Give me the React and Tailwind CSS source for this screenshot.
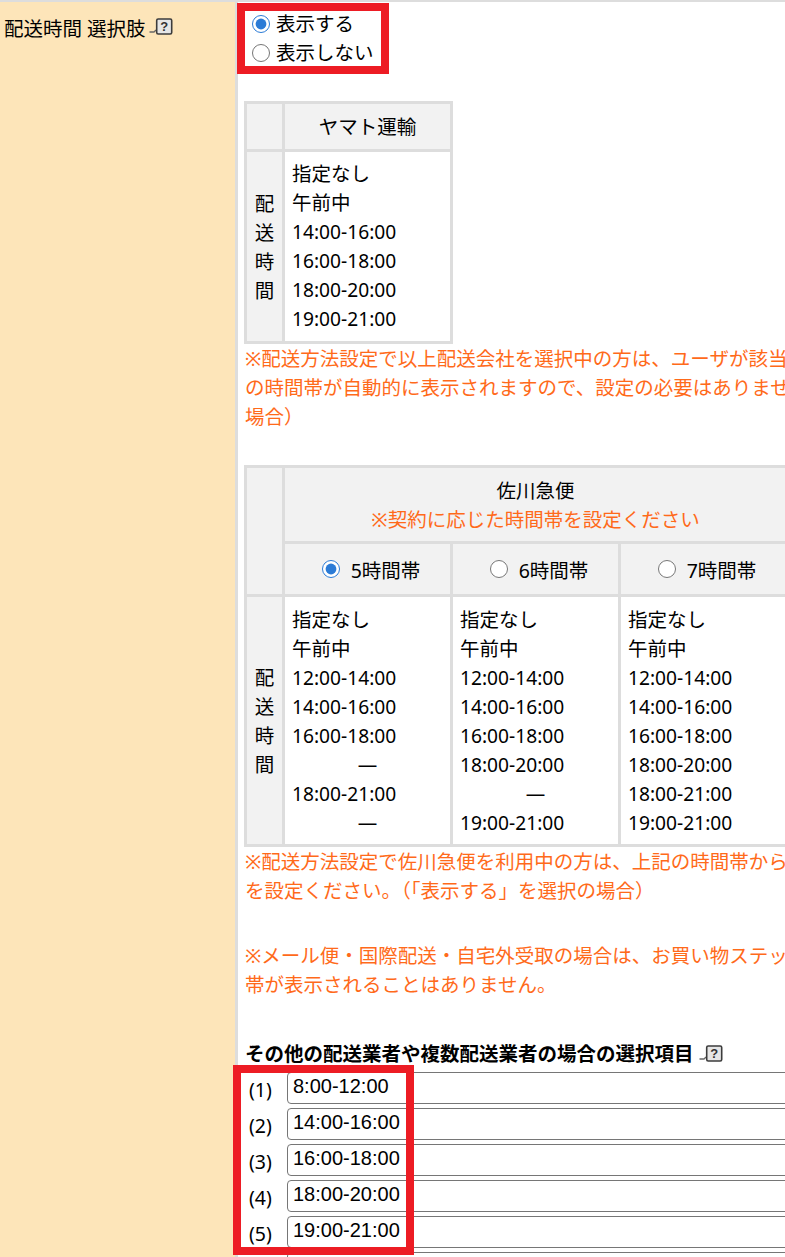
const Help = () => (
  <svg width="24" height="18" viewBox="0 0 24 18" className="block shrink-0">
    <path d="M0.5 14h4.5l2-2" fill="none" stroke="#666" strokeWidth="1.3" />
    <rect x="7.7" y="1" width="15" height="15" rx="1.5" fill="#e6e6e6" stroke="#3c3c3c" strokeWidth="1.6" />
    <text x="15.2" y="13.3" textAnchor="middle" fontSize="13" fontWeight="700" fill="#333" fontFamily="Liberation Sans">?</text>
  </svg>
);

const Radio = ({ on }) => (
  <input type="radio" readOnly checked={!!on} className="m-0 h-[18px] w-[18px] shrink-0 accent-[#2b7bd6]" />
);

const Lines = ({ items }) => (
  <div className="flex flex-col">
    {items.map((t, i) => (
      <div key={i} className={t === "—" ? "h-[29px] text-center" : /^\d/.test(t) ? "h-[29px] text-[19.2px]" : "h-[29px]"}>{t}</div>
    ))}
  </div>
);

const th = "border-[3px] border-[#dddddd] bg-[#f2f2f2] font-normal text-center";
const td1 = "border-[3px] border-[#dddddd] bg-white px-[7px] pt-[7px] pb-[8px] align-top text-left";
const td2 = "border-[3px] border-[#dddddd] bg-white px-[7px] pt-[8px] pb-[7px] align-top text-left";

const VLabel = () => (
  <td className={`${th} w-[38px]`}>
    <div className="flex flex-col items-center">
      {["配", "送", "時", "間"].map((c) => (
        <div key={c} className="h-[29px]">{c}</div>
      ))}
    </div>
  </td>
);

const Head = ({ on, label }) => (
  <th className={`${th} h-[53px] w-[168px] pl-[7px]`}>
    <div className="flex items-center justify-center gap-[11px]">
      <Radio on={on} />
      <span className="mt-[3px]">{label}</span>
    </div>
  </th>
);

const inputs = ["8:00-12:00", "14:00-16:00", "16:00-18:00", "18:00-20:00", "19:00-21:00", ""];

export default function App() {
  return (
    <div className="relative h-[1257px] w-[785px] overflow-hidden bg-white text-[19.5px] leading-[29px] text-black [font-family:'Noto_Sans','Noto_Sans_CJK_JP',sans-serif]">
      <div className="h-[2px] bg-[#dddddd]" />
      <div className="flex h-[1255px]">
        <div className="flex w-[235px] shrink-0 items-start bg-[#fde5b9] pl-[4px] pt-[12px]">
          <span>配送時間 選択肢</span>
          <span className="ml-[3px] mt-[4px] flex"><Help /></span>
        </div>
        <div className="w-[3px] shrink-0 bg-[#dddddd]" />
        <div className="w-[900px] shrink-0 pl-[6px]">
          <div className="pl-[8px] pt-[7px]">
            <label className="flex h-[29px] items-center gap-[6px]"><Radio on /><span>表示する</span></label>
            <label className="flex h-[29px] items-center gap-[6px]"><Radio /><span>表示しない</span></label>
          </div>

          <table className="mt-[34px] border-collapse">
            <tbody>
              <tr>
                <th className={`${th} w-[38px]`} />
                <th className={`${th} h-[48px] w-[168px]`}>ヤマト運輸</th>
              </tr>
              <tr>
                <VLabel />
                <td className={td1}>
                  <Lines items={["指定なし", "午前中", "14:00-16:00", "16:00-18:00", "18:00-20:00", "19:00-21:00"]} />
                </td>
              </tr>
            </tbody>
          </table>

          <div className="w-[760px] whitespace-nowrap pl-[1px] text-[#ff6a1a]">
            <div>※配送方法設定で以上配送会社を選択中の方は、ユーザが該当</div>
            <div>の時間帯が自動的に表示されますので、設定の必要はありませ</div>
            <div>場合）</div>
          </div>

          <table className="mt-[34px] border-collapse">
            <tbody>
              <tr>
                <th rowSpan={2} className={`${th} w-[38px]`} />
                <th colSpan={3} className={`${th} h-[76px]`}>
                  <div>佐川急便</div>
                  <div className="text-[#ff6a1a]">※契約に応じた時間帯を設定ください</div>
                </th>
              </tr>
              <tr>
                <Head on label="5時間帯" />
                <Head label="6時間帯" />
                <Head label="7時間帯" />
              </tr>
              <tr>
                <VLabel />
                <td className={td2}>
                  <Lines items={["指定なし", "午前中", "12:00-14:00", "14:00-16:00", "16:00-18:00", "—", "18:00-21:00", "—"]} />
                </td>
                <td className={td2}>
                  <Lines items={["指定なし", "午前中", "12:00-14:00", "14:00-16:00", "16:00-18:00", "18:00-20:00", "—", "19:00-21:00"]} />
                </td>
                <td className={td2}>
                  <Lines items={["指定なし", "午前中", "12:00-14:00", "14:00-16:00", "16:00-18:00", "18:00-20:00", "18:00-21:00", "19:00-21:00"]} />
                </td>
              </tr>
            </tbody>
          </table>

          <div className="w-[760px] whitespace-nowrap pl-[1px] text-[#ff6a1a]">
            <div>※配送方法設定で佐川急便を利用中の方は、上記の時間帯から</div>
            <div>を設定ください。（「表示する」を選択の場合）</div>
            <div className="mt-[36px]">※メール便・国際配送・自宅外受取の場合は、お買い物ステッ</div>
            <div>帯が表示されることはありません。</div>
          </div>

          <div className="mt-[40px] flex h-[29px] items-center pl-[1px] font-bold">
            <span>その他の配送業者や複数配送業者の場合の選択項目</span>
            <span className="ml-[5px] flex"><Help /></span>
          </div>

          <div className="mt-[4px] flex flex-col gap-[4px] pl-[5px]">
            {inputs.map((v, i) => (
              <div key={i} className="flex h-[32px] items-center">
                <span className="mt-[2px] w-[38px]">{v ? `(${i + 1})` : ""}</span>
                <input
                  readOnly
                  value={v}
                  className="h-[32px] w-[700px] rounded-[4px] border border-[#767676] bg-white px-[5px] pb-[3px] text-[20px] text-black [font-family:'Liberation_Sans',sans-serif]"
                />
              </div>
            ))}
          </div>
        </div>
      </div>

      <div className="absolute left-[237px] top-[3px] h-[71px] w-[152px] border-[8px] border-[#ed1c24]" />
      <div className="absolute left-[233px] top-[1065px] h-[190px] w-[181px] border-[8px] border-[#ed1c24]" />
    </div>
  );
}
